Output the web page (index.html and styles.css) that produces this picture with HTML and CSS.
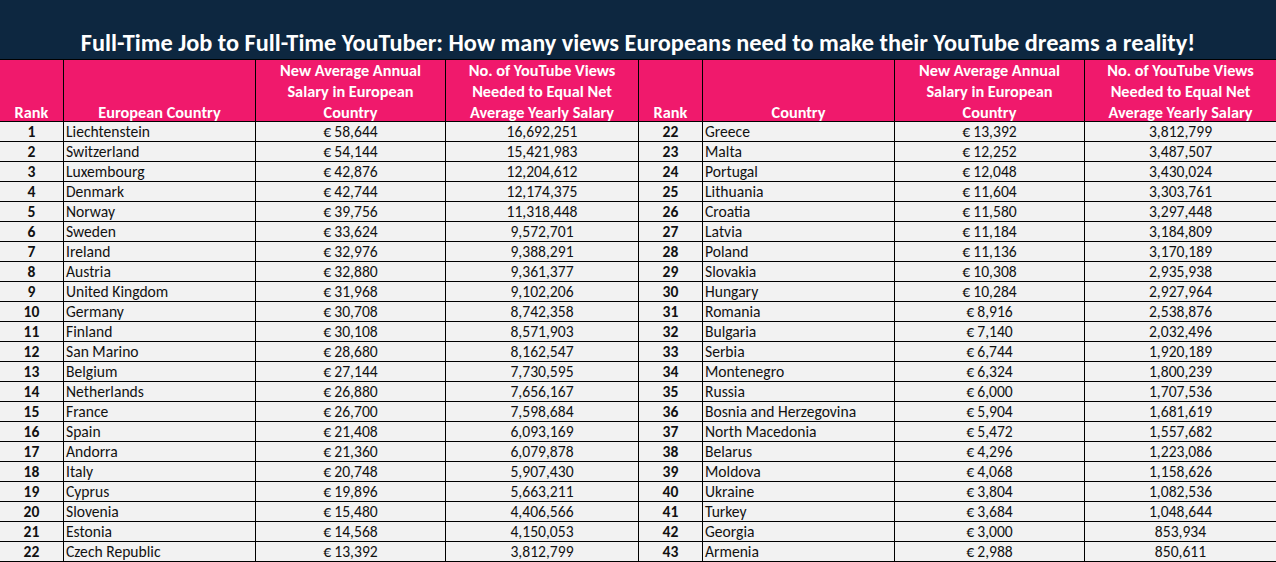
FILE: index.html
```html
<!DOCTYPE html>
<html lang="en">
<head>
<meta charset="utf-8">
<title>Full-Time Job to Full-Time YouTuber</title>
<link rel="stylesheet" href="styles.css">
</head>
<body>
<div class="sheet">
  <h1 class="title">Full-Time Job to Full-Time YouTuber: How many views Europeans need to make their YouTube dreams a reality!</h1>
  <table class="grid">
    <colgroup>
      <col class="c-rank"><col class="c-country"><col class="c-salary"><col class="c-views">
      <col class="c-rank2"><col class="c-country2"><col class="c-salary2"><col class="c-views2">
    </colgroup>
    <thead>
      <tr>
        <th><div class="hd">Rank</div></th>
        <th><div class="hd">European Country</div></th>
        <th class="wrap-salary"><div class="hd">New Average Annual Salary in European Country</div></th>
        <th><div class="hd">No. of YouTube Views Needed to Equal Net Average Yearly Salary</div></th>
        <th><div class="hd">Rank</div></th>
        <th><div class="hd">Country</div></th>
        <th class="wrap-salary"><div class="hd">New Average Annual Salary in European Country</div></th>
        <th class="last"><div class="hd">No. of YouTube Views Needed to Equal Net Average Yearly Salary</div></th>
      </tr>
    </thead>
    <tbody>
      <tr><td class="rank">1</td><td class="name">Liechtenstein</td><td class="num">€&#8201;58,644</td><td class="num">16,692,251</td><td class="rank">22</td><td class="name">Greece</td><td class="num">€&#8201;13,392</td><td class="num last">3,812,799</td></tr>
      <tr><td class="rank">2</td><td class="name">Switzerland</td><td class="num">€&#8201;54,144</td><td class="num">15,421,983</td><td class="rank">23</td><td class="name">Malta</td><td class="num">€&#8201;12,252</td><td class="num last">3,487,507</td></tr>
      <tr><td class="rank">3</td><td class="name">Luxembourg</td><td class="num">€&#8201;42,876</td><td class="num">12,204,612</td><td class="rank">24</td><td class="name">Portugal</td><td class="num">€&#8201;12,048</td><td class="num last">3,430,024</td></tr>
      <tr><td class="rank">4</td><td class="name">Denmark</td><td class="num">€&#8201;42,744</td><td class="num">12,174,375</td><td class="rank">25</td><td class="name">Lithuania</td><td class="num">€&#8201;11,604</td><td class="num last">3,303,761</td></tr>
      <tr><td class="rank">5</td><td class="name">Norway</td><td class="num">€&#8201;39,756</td><td class="num">11,318,448</td><td class="rank">26</td><td class="name">Croatia</td><td class="num">€&#8201;11,580</td><td class="num last">3,297,448</td></tr>
      <tr><td class="rank">6</td><td class="name">Sweden</td><td class="num">€&#8201;33,624</td><td class="num">9,572,701</td><td class="rank">27</td><td class="name">Latvia</td><td class="num">€&#8201;11,184</td><td class="num last">3,184,809</td></tr>
      <tr><td class="rank">7</td><td class="name">Ireland</td><td class="num">€&#8201;32,976</td><td class="num">9,388,291</td><td class="rank">28</td><td class="name">Poland</td><td class="num">€&#8201;11,136</td><td class="num last">3,170,189</td></tr>
      <tr><td class="rank">8</td><td class="name">Austria</td><td class="num">€&#8201;32,880</td><td class="num">9,361,377</td><td class="rank">29</td><td class="name">Slovakia</td><td class="num">€&#8201;10,308</td><td class="num last">2,935,938</td></tr>
      <tr><td class="rank">9</td><td class="name">United Kingdom</td><td class="num">€&#8201;31,968</td><td class="num">9,102,206</td><td class="rank">30</td><td class="name">Hungary</td><td class="num">€&#8201;10,284</td><td class="num last">2,927,964</td></tr>
      <tr><td class="rank">10</td><td class="name">Germany</td><td class="num">€&#8201;30,708</td><td class="num">8,742,358</td><td class="rank">31</td><td class="name">Romania</td><td class="num">€&#8201;8,916</td><td class="num last">2,538,876</td></tr>
      <tr><td class="rank">11</td><td class="name">Finland</td><td class="num">€&#8201;30,108</td><td class="num">8,571,903</td><td class="rank">32</td><td class="name">Bulgaria</td><td class="num">€&#8201;7,140</td><td class="num last">2,032,496</td></tr>
      <tr><td class="rank">12</td><td class="name">San Marino</td><td class="num">€&#8201;28,680</td><td class="num">8,162,547</td><td class="rank">33</td><td class="name">Serbia</td><td class="num">€&#8201;6,744</td><td class="num last">1,920,189</td></tr>
      <tr><td class="rank">13</td><td class="name">Belgium</td><td class="num">€&#8201;27,144</td><td class="num">7,730,595</td><td class="rank">34</td><td class="name">Montenegro</td><td class="num">€&#8201;6,324</td><td class="num last">1,800,239</td></tr>
      <tr><td class="rank">14</td><td class="name">Netherlands</td><td class="num">€&#8201;26,880</td><td class="num">7,656,167</td><td class="rank">35</td><td class="name">Russia</td><td class="num">€&#8201;6,000</td><td class="num last">1,707,536</td></tr>
      <tr><td class="rank">15</td><td class="name">France</td><td class="num">€&#8201;26,700</td><td class="num">7,598,684</td><td class="rank">36</td><td class="name">Bosnia and Herzegovina</td><td class="num">€&#8201;5,904</td><td class="num last">1,681,619</td></tr>
      <tr><td class="rank">16</td><td class="name">Spain</td><td class="num">€&#8201;21,408</td><td class="num">6,093,169</td><td class="rank">37</td><td class="name">North Macedonia</td><td class="num">€&#8201;5,472</td><td class="num last">1,557,682</td></tr>
      <tr><td class="rank">17</td><td class="name">Andorra</td><td class="num">€&#8201;21,360</td><td class="num">6,079,878</td><td class="rank">38</td><td class="name">Belarus</td><td class="num">€&#8201;4,296</td><td class="num last">1,223,086</td></tr>
      <tr><td class="rank">18</td><td class="name">Italy</td><td class="num">€&#8201;20,748</td><td class="num">5,907,430</td><td class="rank">39</td><td class="name">Moldova</td><td class="num">€&#8201;4,068</td><td class="num last">1,158,626</td></tr>
      <tr><td class="rank">19</td><td class="name">Cyprus</td><td class="num">€&#8201;19,896</td><td class="num">5,663,211</td><td class="rank">40</td><td class="name">Ukraine</td><td class="num">€&#8201;3,804</td><td class="num last">1,082,536</td></tr>
      <tr><td class="rank">20</td><td class="name">Slovenia</td><td class="num">€&#8201;15,480</td><td class="num">4,406,566</td><td class="rank">41</td><td class="name">Turkey</td><td class="num">€&#8201;3,684</td><td class="num last">1,048,644</td></tr>
      <tr><td class="rank">21</td><td class="name">Estonia</td><td class="num">€&#8201;14,568</td><td class="num">4,150,053</td><td class="rank">42</td><td class="name">Georgia</td><td class="num">€&#8201;3,000</td><td class="num last">853,934</td></tr>
      <tr><td class="rank">22</td><td class="name">Czech Republic</td><td class="num">€&#8201;13,392</td><td class="num">3,812,799</td><td class="rank">43</td><td class="name">Armenia</td><td class="num">€&#8201;2,988</td><td class="num last">850,611</td></tr>
    </tbody>
  </table>
</div>
</body>
</html>
```
FILE: styles.css
```css
* { box-sizing: border-box; }
html, body {
  margin: 0;
  padding: 0;
  background: #f2f2f2;
}
body {
  font-family: Carlito, Lato, "Open Sans", sans-serif;
  color: #111;
}
.sheet {
  width: 1276px;
  height: 562px;
  overflow: hidden;
}
.title {
  margin: 0;
  height: 60px;
  background: #0d2740;
  border-bottom: 1px solid #000;
  color: #fff;
  font-size: 24.3px;
  font-weight: 700;
  line-height: 26px;
  text-align: center;
  display: flex;
  align-items: flex-end;
  justify-content: center;
  padding-bottom: 3px;
  white-space: nowrap;
}
.grid {
  border-collapse: separate;
  border-spacing: 0;
  table-layout: fixed;
  width: 1276px;
}
.c-rank { width: 64px; }
.c-country { width: 192px; }
.c-salary { width: 190px; }
.c-views { width: 193px; }
.c-rank2 { width: 64px; }
.c-country2 { width: 192px; }
.c-salary2 { width: 190px; }
.c-views2 { width: 191px; }

.grid th {
  background: #f0196c;
  color: #fff;
  font-size: 16.3px;
  font-weight: 700;
  line-height: 21px;
  height: 62px;
  padding: 0 3px 0;
  vertical-align: bottom;
  text-align: center;
  border-right: 1px solid #000;
  border-bottom: 1px solid #000;
}
.grid th .hd {
  margin-top: -4px;
  margin-bottom: -1.5px;
}
.grid th.wrap-salary {
  padding: 0 12px;
}
.grid td {
  background: #f2f2f2;
  font-size: 15.6px;
  line-height: 19px;
  height: 20px;
  padding: 0;
  white-space: nowrap;
  border-right: 1px solid #000;
  border-bottom: 1px solid #000;
  overflow: hidden;
}
.grid .last { border-right: 0; }
.grid td.rank {
  text-align: center;
  font-weight: 700;
}
.grid td.name {
  text-align: left;
  padding-left: 2px;
}
.grid td.num {
  text-align: center;
}
```
